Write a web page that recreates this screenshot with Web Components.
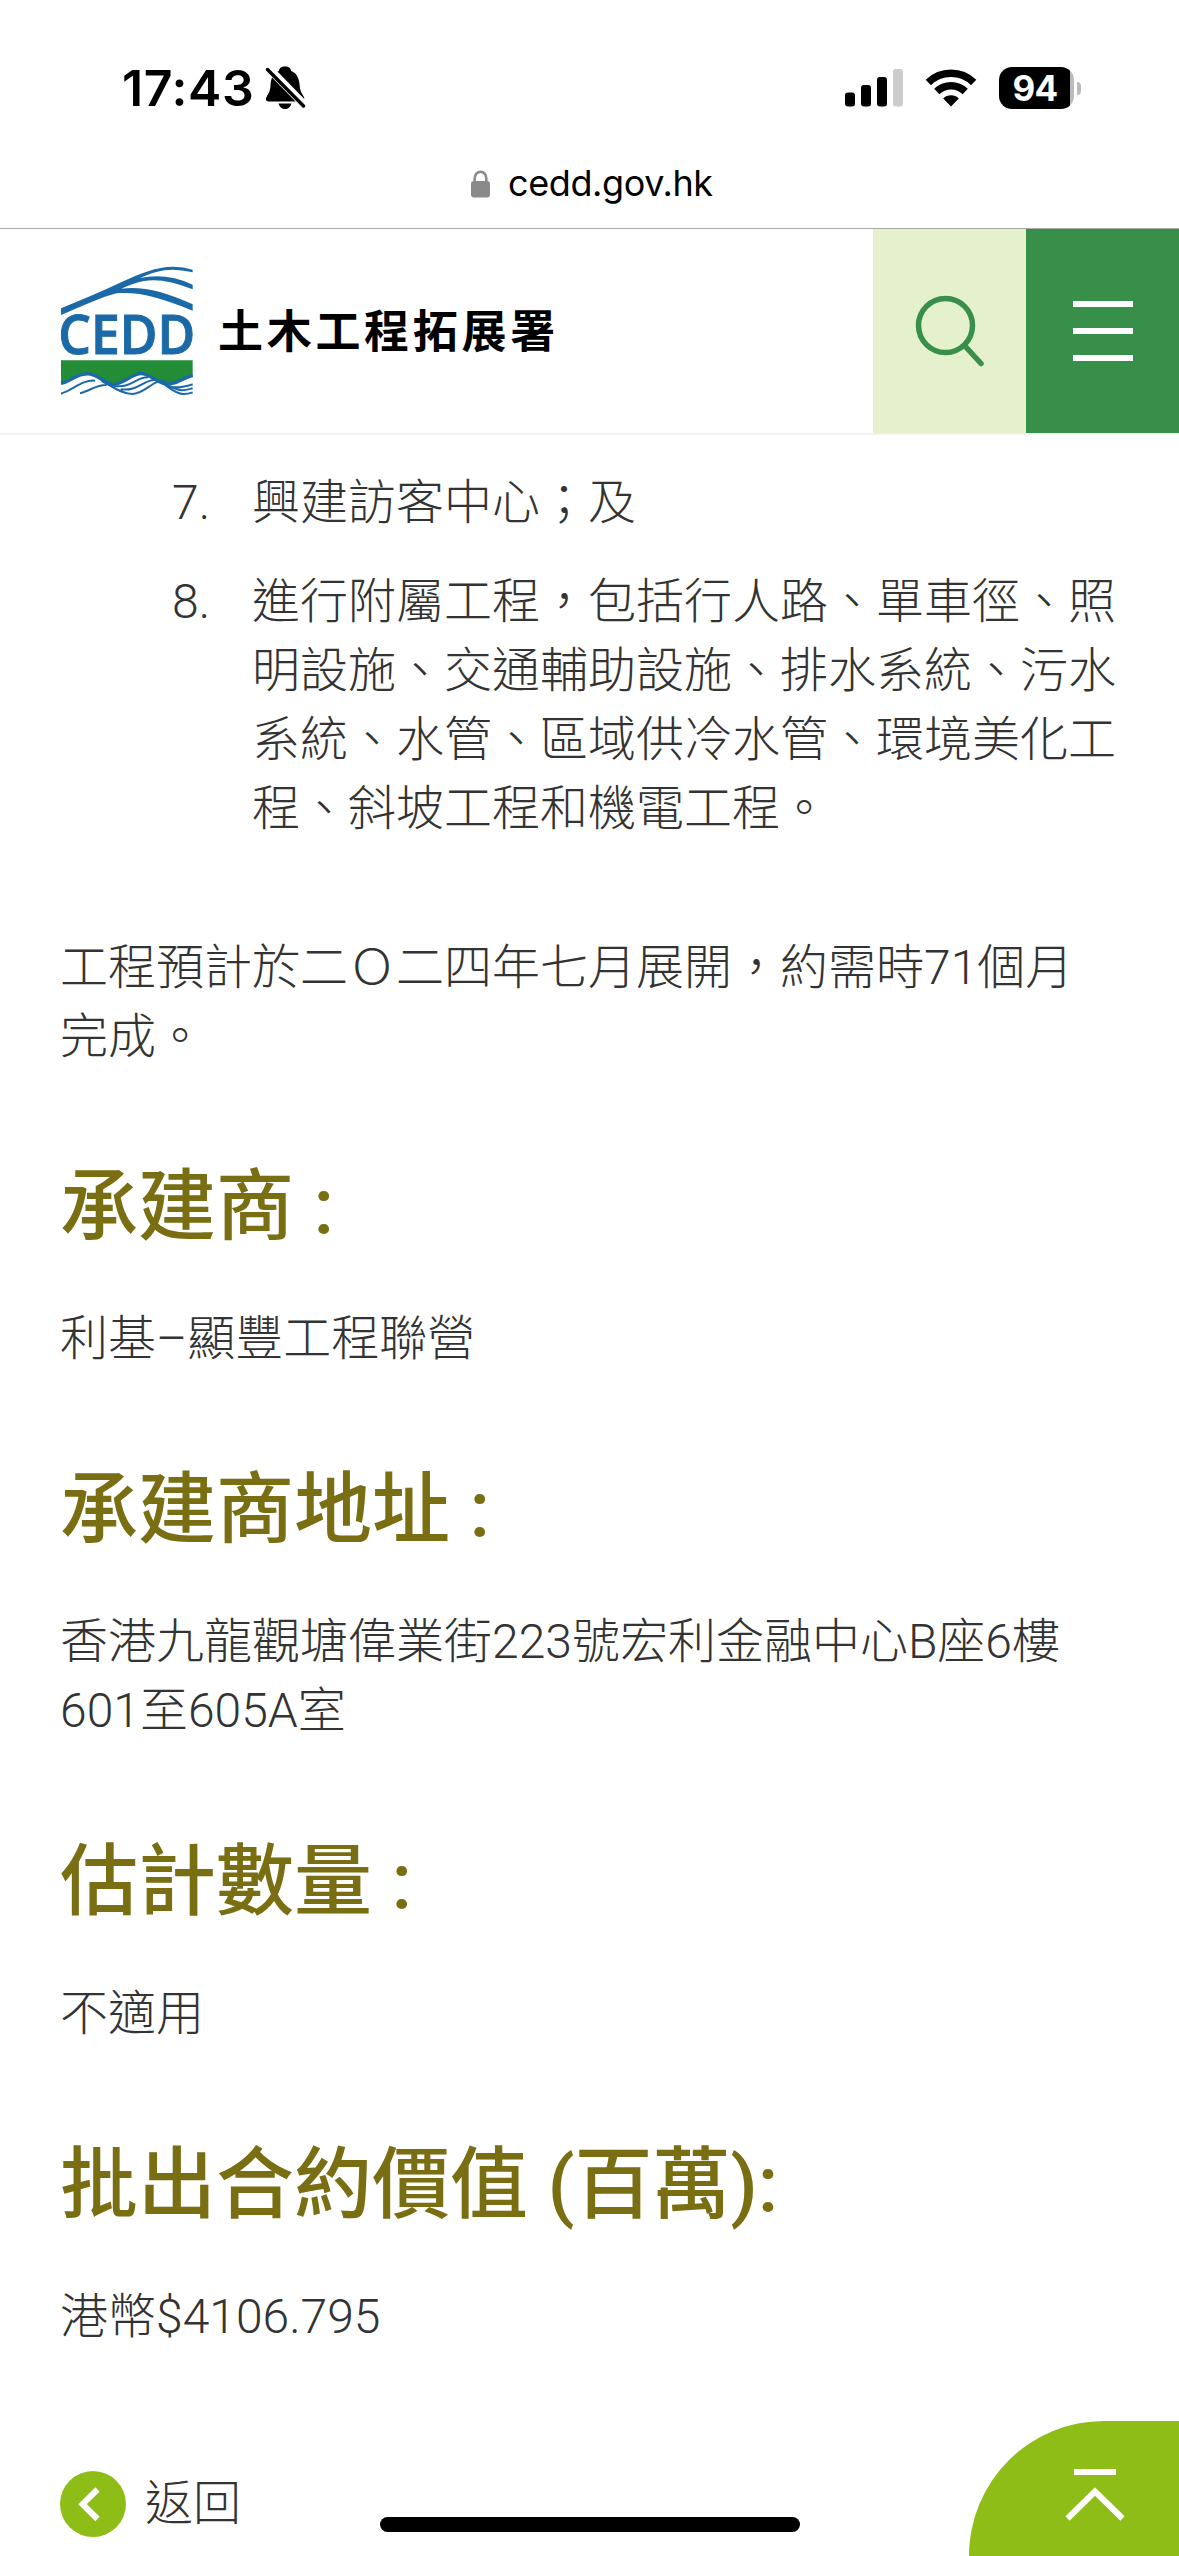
<!DOCTYPE html>
<html lang="zh-HK">
<head>
<meta charset="utf-8">
<title>土木工程拓展署</title>
<style>
html,body{margin:0;padding:0;background:#fff}
body{width:1179px;height:2556px;overflow:hidden;font-family:Roboto,"Noto Sans CJK TC",sans-serif;color:#333}
</style>
</head>
<body>
<cedd-page>
  <status-bar slot="top" time="17:43" level="94"></status-bar>
  <address-bar slot="top">cedd.gov.hk</address-bar>
  <site-header slot="top">土木工程拓展署</site-header>
  <work-item no="7.">興建訪客中心；及</work-item>
  <work-item no="8.">進行附屬工程，包括行人路、單車徑、照<br>明設施、交通輔助設施、排水系統、污水<br>系統、水管、區域供冷水管、環境美化工<br>程、斜坡工程和機電工程。</work-item>
  <text-block class="schedule">工程預計於二Ｏ二四年七月展開，約需時71個月<br>完成。</text-block>
  <info-section heading="承建商 :">利基–顯豐工程聯營</info-section>
  <info-section heading="承建商地址 :">香港九龍觀塘偉業街223號宏利金融中心B座6樓<br>601至605A室</info-section>
  <info-section heading="估計數量 :">不適用</info-section>
  <info-section heading="批出合約價值 (百萬):">港幣$4106.795</info-section>
  <back-link>返回</back-link>
  <to-top slot="overlay"></to-top>
  <home-indicator slot="overlay"></home-indicator>
</cedd-page>
<script>
const define = (name, html) => customElements.define(name, class extends HTMLElement {
  constructor() {
    super();
    this.attachShadow({mode: 'open'}).innerHTML =
      typeof html === 'function' ? html(this) : html;
  }
});

define('cedd-page', `
<style>
:host{display:flex;flex-direction:column;position:relative;width:1179px;height:2556px;overflow:hidden;background:#fff}
main{display:flex;flex-direction:column;padding:33px 0 0 60px}
::slotted(work-item){margin-bottom:30px}
::slotted(.schedule){margin-top:60px;margin-bottom:-1px}
</style>
<slot name="top"></slot><main><slot></slot></main><slot name="overlay"></slot>`);

define('status-bar', el => `
<style>
:host{display:flex;height:144px;box-sizing:border-box;padding:0 98px 0 122px;justify-content:space-between;font-family:Inter,sans-serif;color:#000}
div{display:flex;align-items:center;height:176px}
.time{font-size:50px;font-weight:600;letter-spacing:.6px;line-height:60px}
.bell{margin-left:11px}
.wifi{margin:0 22px}
.bat{position:relative;width:75px;height:42px;border-radius:13px;background:linear-gradient(90deg,#000 71px,#bbb 71px);color:#fff;font-size:35px;font-weight:700;letter-spacing:-.6px}
.bat span{width:72px;text-align:center}
.nub{width:4px;height:13px;margin-left:3px;border-radius:0 5px 5px 0;background:#bbb}
</style>
<div><span class="time">${el.getAttribute('time')}</span>
<svg class="bell" width="42" height="44" viewBox="265 67 42 44"><path d="M285 67.500c-4 0-5.800 2-6.200 4.500-6 2.500-8 8-8.300 15-.3 6-3 8.500-4.200 11.500-1 2.500.3 4 2.800 4h31.500c3 0 4.500-2 3.200-4.700-1.500-3-3.700-5-4.100-11-.5-7-2.500-12.500-8.500-14.800-.4-2.500-2.200-4.500-6.200-4.500zM278.500 104.500h13c-.8 3.500-3.300 5.500-6.500 5.500s-5.700-2-6.500-5.500z"/><path d="M265 65.500L307 108.500" stroke="#fff" stroke-width="8"/><path d="M267.500 70.500L303.500 107" stroke="#000" stroke-width="3.400" stroke-linecap="round"/></svg></div>
<div><svg width="58" height="38" viewBox="0 0 58 38"><rect y="23.500" width="10" height="14" rx="3"/><rect x="16" y="16" width="10" height="21.500" rx="3"/><rect x="32" y="8" width="10" height="29.500" rx="3"/><rect x="48" y="0" width="10" height="37.500" rx="3" fill="#ccc"/></svg>
<svg class="wifi" width="52" height="38" viewBox="0 0 52 38"><g fill="none" stroke="#000" stroke-width="7.500"><path d="M3.300 13.500a32.500 32.500 0 0 1 45.400 0"/><path d="M11.800 22.500a20.500 20.500 0 0 1 28.400 0"/></g><path d="M18.200 29.500a11 11 0 0 1 15.600 0L26 37.500z"/></svg>
<div class="bat"><span>${el.getAttribute('level')}</span></div><i class="nub"></i></div>`);

define('address-bar', `
<style>
:host{display:flex;height:85px;box-sizing:border-box;border-bottom:1px solid #a9aba9;padding:0 0 6px 471px;align-items:flex-start;font:400 36px/44px Inter,sans-serif;color:#000}
svg{margin:26px 17px 0 0}
span{padding-top:17px;letter-spacing:-.4px}
</style>
<svg width="20" height="28" viewBox="0 0 20 28"><rect y="11" width="19" height="16.500" rx="3" fill="#8a8a8a"/><path d="M3.700 13V8.500a5.800 6.800 0 0 1 11.600 0V13" fill="none" stroke="#8a8a8a" stroke-width="2.600"/></svg><span><slot></slot></span>`);

define('cedd-logo', `
<style>:host{display:block;width:134px;height:132px}svg{display:block;overflow:visible}</style>
<svg width="134" height="132" viewBox="60 45 402 396">
<g fill="#1c69a8">
<path d="M63 175C130 147 190 122 245 96C300 70 350 50 400 50Q430 50 458 59V67Q425 59 398 59C365 59 335 68 300 84Q380 68 458 104V118Q370 82 312 93C285 98 262 108 244 116Q330 103 458 163V182C360 143 300 125 230 130C190 139 130 167 63 195Z"/>
</g>
<text x="55" y="311" font-family="Open Sans,sans-serif" font-weight="600" font-size="162" fill="#1c69a8" stroke="#1c69a8" stroke-width="3" textLength="411" lengthAdjust="spacingAndGlyphs">CEDD</text>
<path fill="#238c37" d="M63 331H458V377C425 385 405 408 370 400C340 390 325 368 300 370C270 374 250 402 215 406C185 392 165 366 137 370C110 372 90 395 63 400Z"/>
<g fill="none" stroke="#1c69a8" stroke-width="6">
<path stroke-width="10" d="M63 400C90 395 110 372 137 372C165 368 185 392 215 404C250 404 270 375 300 371C325 368 340 390 370 400C405 408 425 385 458 376"/>
<path d="M63 431C100 420 125 389 165 392M120 430C150 422 172 403 200 405M185 393C215 408 245 432 277 432C315 432 340 386 378 392M222 407C270 418 288 380 325 382M242 418C295 425 310 387 350 389M350 389C382 405 403 432 430 432Q445 432 458 427M370 400C400 420 430 411 458 403M390 408C420 428 440 419 458 415"/>
</g>
</svg>`);

define('site-header', `
<style>
:host{display:flex;height:206px;box-sizing:border-box;border-bottom:2px solid #f1f2f1;align-items:stretch;background:#fff}
.brand{display:flex;flex:1;align-items:center;padding:0 0 0 60px}
.name{font:700 45px/60px "Noto Sans CJK TC",sans-serif;letter-spacing:3.700px;color:#000;margin:0 0 4px 24px}
.btn{display:flex;width:153px;align-items:center;justify-content:center}
.search{background:#e5f0cc}
.menu{background:#378f49;flex-direction:column;gap:21px}
.menu i{width:60px;height:6px;background:#fff}
</style>
<div class="brand"><cedd-logo></cedd-logo><span class="name"><slot></slot></span></div>
<div class="btn search"><svg width="72" height="74" viewBox="0 0 72 74" fill="none" stroke="#378f49" stroke-width="5.500" stroke-linecap="round"><circle cx="31.500" cy="31.500" r="27"/><path d="M50.500 51.500L67 69.500"/></svg></div>
<div class="btn menu"><i></i><i></i><i></i></div>`);

define('work-item', el => `
<style>
:host{display:flex;padding-left:112px;font-weight:300;font-size:48px;line-height:69px;white-space:nowrap}
b{font-weight:300;width:80px}
</style>
<b>${el.getAttribute('no')}</b><span><slot></slot></span>`);

define('text-block', `
<style>:host{display:block;font-weight:300;font-size:48px;line-height:69px;white-space:nowrap}</style><slot></slot>`);

define('info-section', el => `
<style>
:host{display:block}
h2{margin:84px 0 43px;font-weight:500;font-size:78px;line-height:107px;color:#7a6e13;white-space:nowrap}
</style>
<h2>${el.getAttribute('heading')}</h2><text-block><slot></slot></text-block>`);

define('back-link', `
<style>
:host{display:flex;align-items:center;gap:19px;margin-top:120px;height:66px;font-weight:300;font-size:48px;line-height:66px}
svg{display:block}
</style>
<svg width="66" height="66" viewBox="0 0 66 66"><circle cx="33" cy="33" r="33" fill="#8ebd17"/><path d="M37.500 18.500L22.500 33.200L37.500 48" fill="none" stroke="#fff" stroke-width="6"/></svg><span><slot></slot></span>`);

define('to-top', `
<style>
:host{display:block;position:absolute;right:0;bottom:0;width:210px;height:135px;background:#8ebd17;border-radius:135px 0 0 0}
</style>
<svg width="210" height="135" viewBox="969 2421 210 135"><path d="M1074 2472H1116M1067.500 2518.500L1095 2491.500L1122.500 2518.500" fill="none" stroke="#fff" stroke-width="6"/></svg>`);

define('home-indicator', `
<style>:host{display:block;position:absolute;left:380px;bottom:24px;width:420px;height:15px;border-radius:8px;background:#000}</style>`);
</script>
</body>
</html>
